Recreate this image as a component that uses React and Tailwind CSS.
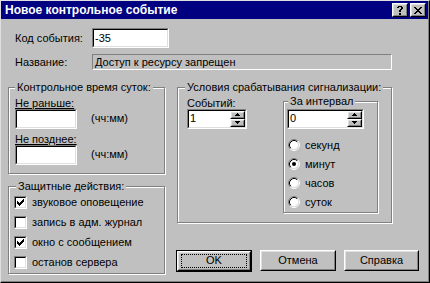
import React from "react";

function Sunken({ className = "", children }) {
  return (
    <div className={`border border-t-[#808080] border-l-[#808080] border-r-white border-b-white ${className}`}>
      <div className="h-full border border-t-black border-l-black border-r-[#dfdfdf] border-b-[#dfdfdf] bg-white flex items-center">
        {children}
      </div>
    </div>
  );
}

function Raised({ className = "", children }) {
  return (
    <div className={`border border-t-white border-l-white border-r-black border-b-black ${className}`}>
      <div className="h-full border border-t-[#dfdfdf] border-l-[#dfdfdf] border-r-[#808080] border-b-[#808080] bg-[#c0c0c0] flex items-center justify-center">
        {children}
      </div>
    </div>
  );
}

function Arrow({ up }) {
  return (
    <svg width="5" height="3" viewBox="0 0 5 3" shapeRendering="crispEdges">
      {up ? (
        <>
          <rect x="2" y="0" width="1" height="1" fill="#000" />
          <rect x="1" y="1" width="3" height="1" fill="#000" />
          <rect x="0" y="2" width="5" height="1" fill="#000" />
        </>
      ) : (
        <>
          <rect x="0" y="0" width="5" height="1" fill="#000" />
          <rect x="1" y="1" width="3" height="1" fill="#000" />
          <rect x="2" y="2" width="1" height="1" fill="#000" />
        </>
      )}
    </svg>
  );
}

function Spin({ className, value }) {
  return (
    <Sunken className={className}>
      <span className="flex-1 pl-[1px] leading-none">{value}</span>
      <div className="flex flex-col">
        <Raised className="w-[15px] h-[8px]"><Arrow up /></Raised>
        <Raised className="w-[15px] h-[8px]"><Arrow /></Raised>
      </div>
    </Sunken>
  );
}

function Group({ title, className = "", titleLeft = "left-[6px]", children }) {
  return (
    <div className={`relative border border-[#808080] shadow-[inset_1px_1px_0_#fff,1px_1px_0_#fff] ${className}`}>
      <span className={`absolute top-[-7px] ${titleLeft} bg-[#c0c0c0] px-[2px] leading-[13px] whitespace-nowrap`}>
        {title}
      </span>
      {children}
    </div>
  );
}

function Check({ checked, label }) {
  return (
    <div className="h-[20px] flex items-center gap-[5px]">
      <Sunken className="w-[13px] h-[13px]">
        {checked && (
          <svg width="7" height="7" viewBox="0 0 7 7" shapeRendering="crispEdges" className="ml-[1px]">
            <rect x="6" y="0" width="1" height="1" />
            <rect x="5" y="1" width="2" height="1" />
            <rect x="0" y="2" width="1" height="1" />
            <rect x="4" y="2" width="3" height="1" />
            <rect x="0" y="3" width="2" height="1" />
            <rect x="3" y="3" width="3" height="1" />
            <rect x="0" y="4" width="5" height="1" />
            <rect x="1" y="5" width="3" height="1" />
            <rect x="2" y="6" width="1" height="1" />
          </svg>
        )}
      </Sunken>
      <span>{label}</span>
    </div>
  );
}

function Radio({ checked, label }) {
  return (
    <div className="h-[19px] flex items-center gap-[5px] pl-[1px]">
      <svg width="12" height="12" viewBox="0 0 12 12">
        <circle cx="6" cy="6" r="4.5" fill="#fff" />
        <path d="M2.11 9.89 A5.5 5.5 0 0 1 9.89 2.11" stroke="#808080" fill="none" />
        <path d="M9.89 2.11 A5.5 5.5 0 0 1 2.11 9.89" stroke="#fff" fill="none" />
        <path d="M2.82 9.18 A4.5 4.5 0 0 1 9.18 2.82" stroke="#000" fill="none" />
        <path d="M9.18 2.82 A4.5 4.5 0 0 1 2.82 9.18" stroke="#dfdfdf" fill="none" />
        {checked && <circle cx="6" cy="6" r="2" fill="#000" />}
      </svg>
      <span>{label}</span>
    </div>
  );
}

function TimeField({ label, className = "" }) {
  return (
    <div className={className}>
      <div className="leading-[12px] h-[12px]"><span className="underline underline-offset-1">{label}</span></div>
      <div className="flex items-center">
        <Sunken className="w-[62px] h-[20px]" />
        <span className="ml-[14px]">(чч:мм)</span>
      </div>
    </div>
  );
}

export default function App() {
  return (
    <div className="w-[430px] h-[283px] bg-[#c0c0c0] border border-t-[#dfdfdf] border-l-[#dfdfdf] border-r-black border-b-black overflow-hidden text-[11px] text-black font-['Liberation_Sans',Arial,sans-serif]">
      <div className="h-full border-r border-b border-r-[#808080] border-b-[#808080]">

        {/* title bar */}
        <div className="h-[18px] bg-[#000080] flex items-center pl-[4px] pr-[2px]">
          <span className="flex-1 text-white font-bold text-[12px] leading-none">Новое контрольное событие</span>
          <Raised className="w-[16px] h-[14px]">
            <svg width="6" height="9" viewBox="0 0 6 9" shapeRendering="crispEdges">
              <rect x="1" y="0" width="4" height="1" />
              <rect x="0" y="1" width="2" height="1" />
              <rect x="4" y="1" width="2" height="2" />
              <rect x="3" y="3" width="2" height="1" />
              <rect x="2" y="4" width="2" height="2" />
              <rect x="2" y="7" width="2" height="2" />
            </svg>
          </Raised>
          <Raised className="w-[16px] h-[14px] ml-[2px]">
            <svg width="8" height="7" viewBox="0 0 8 7" shapeRendering="crispEdges">
              <rect x="0" y="0" width="2" height="1" /><rect x="6" y="0" width="2" height="1" />
              <rect x="1" y="1" width="2" height="1" /><rect x="5" y="1" width="2" height="1" />
              <rect x="2" y="2" width="4" height="1" />
              <rect x="3" y="3" width="2" height="1" />
              <rect x="2" y="4" width="4" height="1" />
              <rect x="1" y="5" width="2" height="1" /><rect x="5" y="5" width="2" height="1" />
              <rect x="0" y="6" width="2" height="1" /><rect x="6" y="6" width="2" height="1" />
            </svg>
          </Raised>
        </div>

        <div className="pt-[9px] pl-[7px]">

          <div className="flex items-center pl-[7px]">
            <span className="w-[77px]">Код события:</span>
            <Sunken className="w-[77px] h-[20px]">
              <span className="pl-[1px]">-35</span>
            </Sunken>
          </div>

          <div className="flex items-center pl-[7px] mt-[6px]">
            <span className="w-[77px]">Название:</span>
            <div className="w-[300px] h-[16px] border border-t-[#808080] border-l-[#808080] border-r-white border-b-white pl-[2px] flex items-center">
              Доступ к ресурсу запрещен
            </div>
          </div>

          <div className="flex gap-[12px] mt-[16px]">

            <div className="w-[157px]">
              <Group title="Контрольное время суток:" className="h-[87px] pt-[9px] pl-[6px]">
                <TimeField label="Не раньше:" />
                <TimeField label="Не позднее:" className="mt-[4px]" />
              </Group>

              <Group title="Защитные действия:" className="h-[88px] mt-[12px] pt-[6px] pl-[5px]" titleLeft="left-[7px]">
                <Check checked label="звуковое оповещение" />
                <Check label="запись в адм. журнал" />
                <Check checked label="окно с сообщением" />
                <Check label="останов сервера" />
              </Group>
            </div>

            <div className="w-[243px]">
              <Group title="Условия срабатывания сигнализации:" className="w-[215px] h-[136px] pt-[9px] pl-[9px] flex" titleLeft="left-[7px]">
                <div className="w-[96px]">
                  <div className="leading-[12px] h-[12px]">Событий:</div>
                  <Spin className="w-[60px] h-[20px]" value="1" />
                </div>
                <Group title="За интервал" className="mt-[4px] w-[95px] h-[112px] pt-[7px] pl-[3px]" titleLeft="left-[4px]">
                  <Spin className="w-[77px] h-[20px]" value="0" />
                  <div className="mt-[7px]">
                    <Radio label="секунд" />
                    <Radio checked label="минут" />
                    <Radio label="часов" />
                    <Radio label="суток" />
                  </div>
                </Group>
              </Group>

              <div className="flex gap-[8px] mt-[27px] -ml-[1px]">
                <div className="w-[76px] h-[22px] border border-black">
                  <Raised className="h-full">
                    <div className="w-[66px] h-[14px] border border-dotted border-black flex items-center justify-center">
                      OK
                    </div>
                  </Raised>
                </div>
                <Raised className="w-[76px] h-[21px]">Отмена</Raised>
                <Raised className="w-[75px] h-[21px]">Справка</Raised>
              </div>
            </div>

          </div>
        </div>
      </div>
    </div>
  );
}
